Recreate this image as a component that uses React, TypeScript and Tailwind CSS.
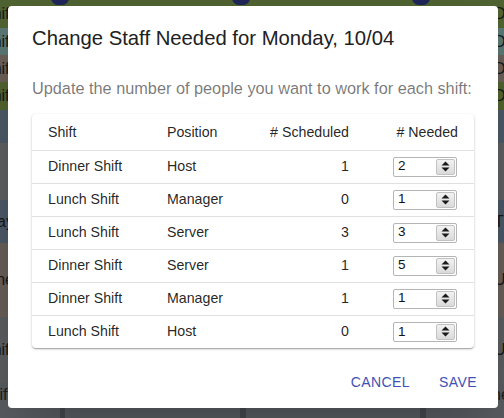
import React from "react";

const rows = [
  { shift: "Dinner Shift", position: "Host", scheduled: 1, needed: 2 },
  { shift: "Lunch Shift", position: "Manager", scheduled: 0, needed: 1 },
  { shift: "Lunch Shift", position: "Server", scheduled: 3, needed: 3 },
  { shift: "Dinner Shift", position: "Server", scheduled: 1, needed: 5 },
  { shift: "Dinner Shift", position: "Manager", scheduled: 1, needed: 1 },
  { shift: "Lunch Shift", position: "Host", scheduled: 0, needed: 1 },
];

// dimmed page behind the dialog
const bands = [
  { h: "h-[28px]", bg: "bg-[#4f6231]", left: "Shift", right: "Dinner" },
  { h: "h-[27px]", bg: "bg-[#5a7773]", left: "Shift", right: "Dinner" },
  { h: "h-[27px]", bg: "bg-[#6b6058]", left: "Shift", right: "Dinner" },
  { h: "h-[28px]", bg: "bg-[#52642f]", left: "Shift", right: "Dinner" },
  { h: "h-[33px]", bg: "bg-[#4c5966]", left: "", right: "" },
  { h: "h-[57px]", bg: "bg-[#5e5f60]", left: "", right: "" },
  { h: "h-[43px]", bg: "bg-[#4b5866]", left: "Tuesday", right: "Thu 1" },
  { h: "h-[74px]", bg: "bg-[#695e58]", left: "None", right: "Unava" },
  { h: "h-[66px]", bg: "bg-[#5b5e60]", left: "Shift", right: "Unava" },
];

function Spinner() {
  return (
    <div className="w-[19px] h-[16px] rounded-[2px] border border-[#c2c2c2] bg-gradient-to-b from-[#f2f2f2] to-[#dadada] flex items-center justify-center">
      <svg width="9" height="11" viewBox="0 0 9 11">
        <path d="M4.5 0.5 L8.5 4.5 L0.5 4.5 Z" fill="#1a1a1a" />
        <path d="M0.5 6.5 L8.5 6.5 L4.5 10.5 Z" fill="#1a1a1a" />
      </svg>
    </div>
  );
}

function NumberBox({ value }: { value: number }) {
  return (
    <div className="ml-auto w-[64px] h-[20px] border border-[#b5b5b5] rounded-[2px] bg-white flex items-center justify-between pl-[4px] pr-[1px] text-[13.5px] text-[#111]">
      <span>{value}</span>
      <Spinner />
    </div>
  );
}

export default function App() {
  return (
    <div
      className="relative w-[504px] h-[418px] overflow-hidden bg-[#55595e]"
      style={{ fontFamily: '"Liberation Sans", Arial, sans-serif' }}
    >
      {/* background page */}
      <div className="flex flex-col text-[16px] text-[#161616]">
        {bands.map((b, i) => (
          <div key={i} className={`${b.h} ${b.bg} flex items-center justify-between`}>
            <div className="w-[14px] overflow-hidden flex justify-end whitespace-nowrap">
              <span>{b.left}</span>
            </div>
            <div className="w-[10px] overflow-hidden whitespace-nowrap">
              <span>{b.right}</span>
            </div>
          </div>
        ))}
        <div className="h-[35px] flex text-[#1c1c1c]">
          <div className="w-[60px] bg-[#585c60] flex justify-end pr-[48px] overflow-hidden">ift</div>
          <div className="w-[5px] bg-[#45484c]" />
          <div className="w-[175px] bg-[#585c60] text-center">Dinner Shift</div>
          <div className="w-[6px] bg-[#45484c]" />
          <div className="w-[174px] bg-[#585c60] text-center">Dinner Shift</div>
          <div className="w-[6px] bg-[#45484c]" />
          <div className="flex-1 bg-[#585c60] pl-[42px] whitespace-nowrap overflow-hidden">Dinner</div>
        </div>
      </div>
      <div className="absolute top-[-9px] left-[51px] w-[18px] h-[14px] rounded-full bg-[#202558]" />
      <div className="absolute top-[-9px] left-[232px] w-[18px] h-[14px] rounded-full bg-[#202558]" />
      <div className="absolute top-[-9px] left-[412px] w-[18px] h-[14px] rounded-full bg-[#202558]" />

      {/* dialog */}
      <div className="absolute inset-0 pt-[6px] pl-[8px]">
        <div className="w-[490px] h-[402px] bg-white rounded-[4px] shadow-2xl flex flex-col">
          <h2 className="px-[24px] pt-[16px] text-[20.3px] leading-[32px] text-[#212121] font-normal whitespace-nowrap">
            Change Staff Needed for Monday, 10/04
          </h2>
          <div className="px-[24px] pt-[22px]">
            <p className="text-[16.3px] leading-[24px] text-[rgba(0,0,0,0.54)] whitespace-nowrap">
              Update the number of people you want to work for each shift:
            </p>
            <div className="mt-[14px] rounded-[4px] bg-white shadow-[0_1px_3px_rgba(0,0,0,0.2),0_1px_1px_rgba(0,0,0,0.14),0_2px_1px_-1px_rgba(0,0,0,0.12)] overflow-hidden">
              <table className="w-full table-fixed border-collapse text-[14.2px] text-[rgba(0,0,0,0.87)]">
                <colgroup>
                  <col className="w-[119px]" />
                  <col className="w-[107px]" />
                  <col className="w-[107px]" />
                  <col className="w-[109px]" />
                </colgroup>
                <thead>
                  <tr className="h-[36px] border-b border-[#e0e0e0]">
                    <th className="pl-[16px] pt-[1px] text-left font-normal">Shift</th>
                    <th className="pl-[16px] pt-[1px] text-left font-normal">Position</th>
                    <th className="pr-[16px] pt-[1px] text-right font-normal">
                      # Scheduled
                    </th>
                    <th className="pr-[16px] pt-[1px] text-right font-normal">
                      # Needed
                    </th>
                  </tr>
                </thead>
                <tbody>
                  {rows.map((r, i) => (
                    <tr
                      key={i}
                      className={
                        i < rows.length - 1
                          ? "h-[33px] border-b border-[#e0e0e0]"
                          : "h-[33px]"
                      }
                    >
                      <td className="pl-[16px] whitespace-nowrap">{r.shift}</td>
                      <td className="pl-[16px]">{r.position}</td>
                      <td className="pr-[16px] text-right">{r.scheduled}</td>
                      <td className="pr-[17px]">
                        <NumberBox value={r.needed} />
                      </td>
                    </tr>
                  ))}
                </tbody>
              </table>
            </div>
          </div>
          <div className="mt-auto p-[8px] flex justify-end gap-[8px]">
            <button className="h-[36px] min-w-[64px] px-[8px] rounded-[4px] text-[14px] font-medium tracking-[0.4px] text-[#3f51b5] uppercase">
              Cancel
            </button>
            <button className="h-[36px] min-w-[64px] px-[8px] rounded-[4px] text-[14px] font-medium tracking-[0.4px] text-[#3f51b5] uppercase">
              Save
            </button>
          </div>
        </div>
      </div>
    </div>
  );
}
